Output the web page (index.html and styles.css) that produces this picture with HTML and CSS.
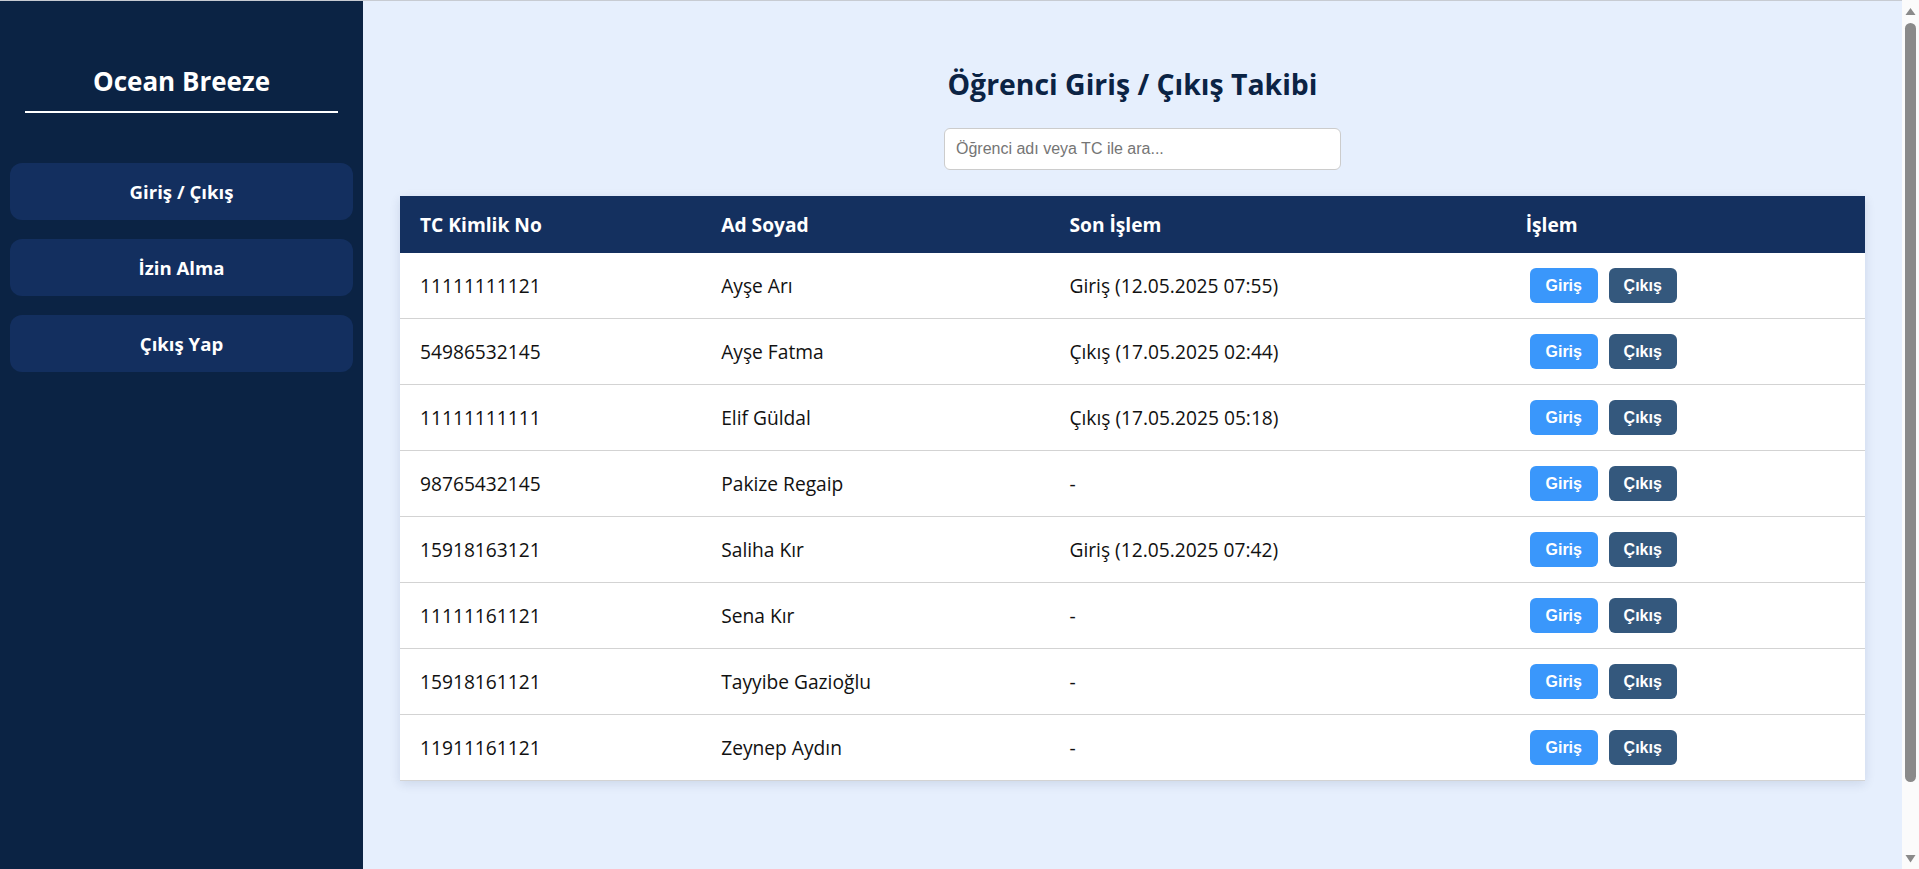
FILE: index.html
```html
<!DOCTYPE html>
<html lang="tr">
<head>
<meta charset="utf-8">
<title>Öğrenci Giriş / Çıkış Takibi</title>
<link rel="stylesheet" href="styles.css">
</head>
<body>
<div class="page">
  <div class="app">
    <aside class="sidebar">
      <h2 class="brand">Ocean Breeze</h2>
      <nav class="nav">
        <a class="nav-item" href="#">Giriş / Çıkış</a>
        <a class="nav-item" href="#">İzin Alma</a>
        <a class="nav-item" href="#">Çıkış Yap</a>
      </nav>
    </aside>
    <main class="main">
      <h1 class="title">Öğrenci Giriş / Çıkış Takibi</h1>
      <div class="search-wrap">
        <input class="search" type="text" placeholder="Öğrenci adı veya TC ile ara...">
      </div>
      <table class="students">
        <colgroup>
          <col class="c-tc"><col class="c-name"><col class="c-last"><col class="c-act">
        </colgroup>
        <thead>
          <tr><th>TC Kimlik No</th><th>Ad Soyad</th><th>Son İşlem</th><th>İşlem</th></tr>
        </thead>
        <tbody>
          <tr><td>11111111121</td><td>Ayşe Arı</td><td>Giriş (12.05.2025 07:55)</td><td><div class="actions"><button class="btn btn-in">Giriş</button><button class="btn btn-out">Çıkış</button></div></td></tr>
          <tr><td>54986532145</td><td>Ayşe Fatma</td><td>Çıkış (17.05.2025 02:44)</td><td><div class="actions"><button class="btn btn-in">Giriş</button><button class="btn btn-out">Çıkış</button></div></td></tr>
          <tr><td>11111111111</td><td>Elif Güldal</td><td>Çıkış (17.05.2025 05:18)</td><td><div class="actions"><button class="btn btn-in">Giriş</button><button class="btn btn-out">Çıkış</button></div></td></tr>
          <tr><td>98765432145</td><td>Pakize Regaip</td><td>-</td><td><div class="actions"><button class="btn btn-in">Giriş</button><button class="btn btn-out">Çıkış</button></div></td></tr>
          <tr><td>15918163121</td><td>Saliha Kır</td><td>Giriş (12.05.2025 07:42)</td><td><div class="actions"><button class="btn btn-in">Giriş</button><button class="btn btn-out">Çıkış</button></div></td></tr>
          <tr><td>11111161121</td><td>Sena Kır</td><td>-</td><td><div class="actions"><button class="btn btn-in">Giriş</button><button class="btn btn-out">Çıkış</button></div></td></tr>
          <tr><td>15918161121</td><td>Tayyibe Gazioğlu</td><td>-</td><td><div class="actions"><button class="btn btn-in">Giriş</button><button class="btn btn-out">Çıkış</button></div></td></tr>
          <tr><td>11911161121</td><td>Zeynep Aydın</td><td>-</td><td><div class="actions"><button class="btn btn-in">Giriş</button><button class="btn btn-out">Çıkış</button></div></td></tr>
        </tbody>
      </table>
    </main>
  </div>
</div>
<div class="scrollbar" aria-hidden="true">
  <span class="sb-arrow"><svg width="17" height="17" viewBox="0 0 17 17"><polygon points="3.5,15 13.5,15 8.5,8"/></svg></span>
  <div class="sb-track"><div class="sb-thumb"></div></div>
  <span class="sb-arrow"><svg width="17" height="17" viewBox="0 0 17 17"><polygon points="3.5,3 13.5,3 8.5,10.5"/></svg></span>
</div>
</body>
</html>
```
FILE: styles.css
```css
html,
body {
  height: 100%;
}

body {
  margin: 0;
  display: flex;
  overflow: hidden;
  font-family: "Open Sans", "Noto Sans", sans-serif;
  color: #111;
  background: #e6effd;
}

.page {
  flex: 1;
  min-width: 0;
  overflow: hidden;
  border-top: 1px solid #c7cbd2;
}

/* browser scrollbar as seen in the screenshot */
.scrollbar {
  flex: 0 0 17px;
  display: flex;
  flex-direction: column;
  background: #fbfbfb;
}

.sb-arrow {
  display: block;
  height: 17px;
}

.sb-arrow svg {
  display: block;
  fill: #8a8a8a;
}

.sb-track {
  flex: 1;
  display: flex;
  flex-direction: column;
  padding: 6px 3px 70px;
}

.sb-thumb {
  flex: 1;
  border-radius: 6px;
  background: #8a8a8a;
}

.app {
  display: flex;
  min-height: 956px;
}

/* Sidebar */
.sidebar {
  flex: 0 0 363px;
  box-sizing: border-box;
  background: #0b2344;
  padding: 61px 10px 0;
}

.brand {
  margin: 0 15px;
  padding-bottom: 11px;
  border-bottom: 2px solid #ffffff;
  color: #ffffff;
  text-align: center;
  font-size: 26px;
  font-weight: 700;
  line-height: 38px;
}

.nav {
  display: flex;
  flex-direction: column;
  gap: 19px;
  margin-top: 50px;
}

.nav-item {
  display: block;
  height: 57px;
  line-height: 57px;
  border-radius: 12px;
  background: #132f5f;
  color: #ffffff;
  text-align: center;
  text-decoration: none;
  font-size: 18.6px;
  font-weight: 700;
}

/* Main */
.main {
  flex: 1;
  min-width: 0;
  padding: 64px 37px 0;
}

.title {
  margin: 0;
  text-align: center;
  color: #0b2344;
  font-size: 28.4px;
  font-weight: 700;
  line-height: 38px;
}

.search-wrap {
  display: flex;
  justify-content: center;
  margin-top: 25px;
}

.search {
  box-sizing: border-box;
  width: 397px;
  height: 42px;
  margin-left: 20px;
  padding: 0 11px;
  border: 1px solid #cccccc;
  border-radius: 6px;
  background: #ffffff;
  font-family: "Liberation Sans", Arial, sans-serif;
  font-size: 16px;
  color: #222;
}

.search::placeholder {
  color: #757575;
}

.students {
  width: 100%;
  margin-top: 26px;
  border-collapse: collapse;
  background: #ffffff;
  box-shadow: 0 3px 10px rgba(20, 40, 90, 0.12);
}

.c-tc { width: 301px; }
.c-name { width: 348px; }
.c-last { width: 456px; }
.c-act { width: 359px; }

.students th {
  padding: 16px 20px;
  background: #14305f;
  color: #ffffff;
  text-align: left;
  font-size: 19.2px;
  font-weight: 700;
  line-height: 25px;
}

.students td {
  padding: 15px 20px;
  border-bottom: 1px solid #d3d3d3;
  vertical-align: middle;
  font-size: 19.2px;
  line-height: 25px;
  color: #111;
}

.actions {
  display: flex;
  gap: 11px;
  padding-left: 4px;
}

.btn {
  box-sizing: border-box;
  min-width: 68px;
  height: 35px;
  padding: 0 14px;
  border: 0;
  border-radius: 6px;
  color: #ffffff;
  font-family: "Liberation Sans", Arial, sans-serif;
  font-size: 16px;
  font-weight: 700;
  cursor: pointer;
}

.btn-in {
  background: #3a97fb;
}

.btn-out {
  background: #34587d;
}
```
